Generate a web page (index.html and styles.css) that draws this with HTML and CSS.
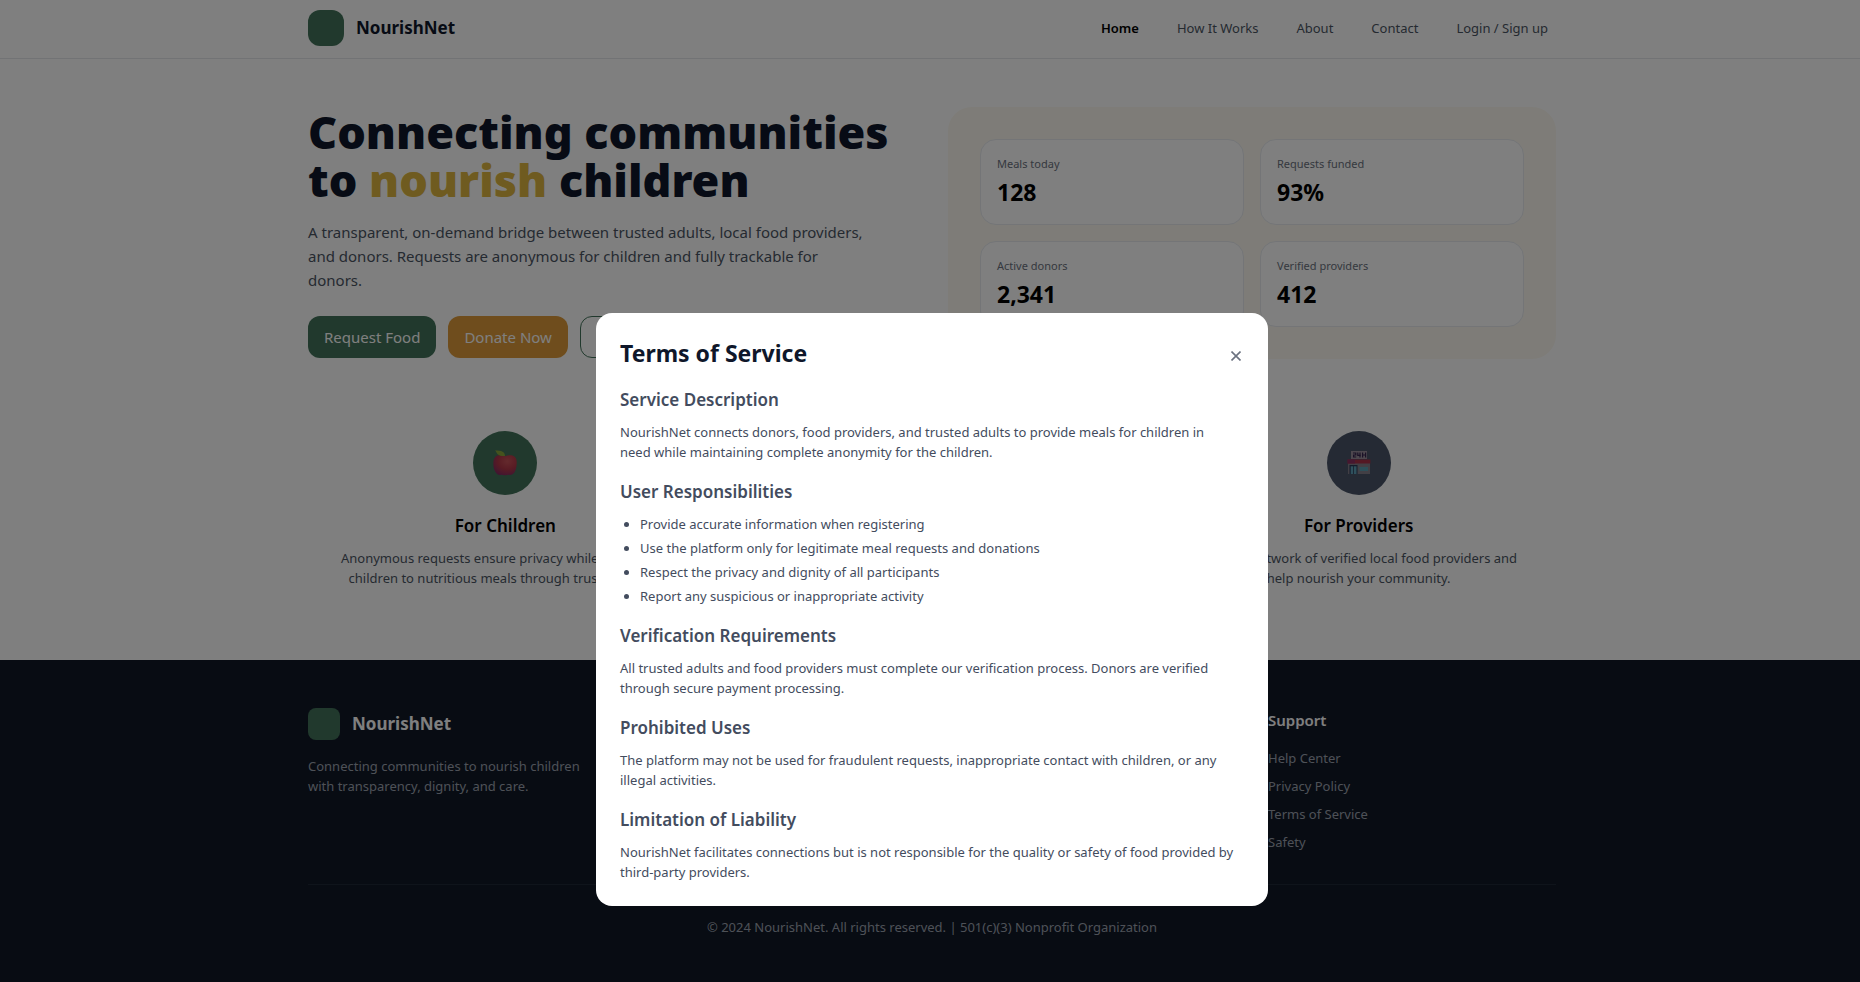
FILE: index.html
```html
<!DOCTYPE html>
<html lang="en">
<head>
<meta charset="utf-8">
<title>NourishNet</title>
<meta name="viewport" content="width=device-width, initial-scale=1">
<link rel="stylesheet" href="styles.css">
</head>
<body>
<header class="site-header">
  <div class="container header-row">
    <a class="brand" href="#"><span class="brand-mark"></span>NourishNet</a>
    <nav class="nav">
      <a class="active" href="#">Home</a>
      <a href="#">How It Works</a>
      <a href="#">About</a>
      <a href="#">Contact</a>
      <a href="#">Login / Sign up</a>
    </nav>
  </div>
</header>

<main>
  <section class="container hero">
    <div class="hero-copy">
      <h1>Connecting communities<br>to <span class="accent">nourish</span> children</h1>
      <p>A transparent, on-demand bridge between trusted adults, local food providers, and donors. Requests are anonymous for children and fully trackable for donors.</p>
      <div class="actions">
        <button class="btn btn-green" type="button">Request Food</button>
        <button class="btn btn-gold" type="button">Donate Now</button>
        <button class="btn btn-outline" type="button" aria-label="Learn More"></button>
      </div>
    </div>
    <div class="stats">
      <div class="stat"><div class="stat-label">Meals today</div><div class="stat-value">128</div></div>
      <div class="stat"><div class="stat-label">Requests funded</div><div class="stat-value">93%</div></div>
      <div class="stat"><div class="stat-label">Active donors</div><div class="stat-value">2,341</div></div>
      <div class="stat"><div class="stat-label">Verified providers</div><div class="stat-value">412</div></div>
    </div>
  </section>

  <section class="container features">
    <article class="feature">
      <div class="feature-icon green">
        <svg width="24" height="26" viewBox="0 0 24 26" aria-hidden="true">
          <defs>
            <radialGradient id="apple" cx="0.6" cy="0.3" r="0.8">
              <stop offset="0" stop-color="#c8545a"/><stop offset="0.5" stop-color="#b23848"/><stop offset="1" stop-color="#7c2866"/>
            </radialGradient>
          </defs>
          <path fill="url(#apple)" d="M12 6.200C14 5.300 17 5 19.500 5.500C22.800 6.500 24 9.500 23.700 13.500C23.500 18 22.500 22 20 24C18 25.300 16.500 25.200 15.200 24.700C13 25.500 11 25.500 8.800 24.700C7 25.500 5.500 25 4 24C1.300 21.500 0.300 17.500 0.300 13.500C0.300 9.500 1.500 6.500 4.500 5.500C7 5 10 5.300 12 6.200Z"/>
          <path fill="#8aa63a" d="M2 .6C5.500 0 9 .6 10.700 2.600C11.600 3.700 11.900 5 12 6C9 6.100 6.300 5.900 4.600 4.300C3.500 3.200 3.300 1.500 2 .6Z"/>
        </svg>
      </div>
      <h3>For Children</h3>
      <p>Anonymous requests ensure privacy while connecting children to nutritious meals through trusted adults.</p>
    </article>
    <article class="feature"></article>
    <article class="feature">
      <div class="feature-icon slate">
        <svg width="24" height="24" viewBox="0 0 24 24" aria-hidden="true">
          <rect x="4" y="0" width="16" height="8" fill="#9a8f9c"/>
          <path fill="none" stroke="#35224e" stroke-width="1.200" d="M6 2h2.800v2H6.600V6H9.200M10.800 1.600v2.800h3M13 1.600v4.800M15.600 1.500v5M18.600 1.500v5M15.600 4h3"/>
          <rect x="1" y="12" width="22" height="11" fill="#857f8b"/>
          <path fill="#a83048" d="M.6 8.500h22.800v4H.6Z"/>
          <path fill="#8d2e60" d="M.6 8.500H8v4H.6Z"/>
          <rect x="2.500" y="14" width="8" height="9" fill="#2a3856"/>
          <rect x="3.700" y="15.300" width="2.500" height="7.700" fill="#5fa0b8"/>
          <rect x="7" y="15.300" width="2.500" height="7.700" fill="#5fa0b8"/>
          <rect x="12.500" y="16" width="8.500" height="4" fill="#5a9fb2"/>
        </svg>
      </div>
      <h3>For Providers</h3>
      <p>Join our network of verified local food providers and<br>help nourish your community.</p>
    </article>
  </section>
</main>

<footer class="site-footer">
  <div class="container">
    <div class="footer-grid">
      <div>
        <a class="brand brand-small" href="#"><span class="brand-mark"></span>NourishNet</a>
        <p class="tagline">Connecting communities to nourish children with transparency, dignity, and care.</p>
      </div>
      <div class="support">
        <h4>Support</h4>
        <ul><li><a href="#">Help Center</a></li><li><a href="#">Privacy Policy</a></li><li><a href="#">Terms of Service</a></li><li><a href="#">Safety</a></li></ul>
      </div>
    </div>
    <p class="copyright">© 2024 NourishNet. All rights reserved. | 501(c)(3) Nonprofit Organization</p>
  </div>
</footer>

<div class="overlay">
  <div class="modal" role="dialog" aria-modal="true" aria-labelledby="modal-title">
    <div class="modal-head">
      <h2 id="modal-title">Terms of Service</h2>
      <button class="close" type="button" aria-label="Close"><svg width="10" height="10" viewBox="0 0 10 10" aria-hidden="true"><path d="M.5.500l9 9M9.500.500l-9 9" fill="none" stroke="currentColor" stroke-width="1.600"/></svg></button>
    </div>
    <div class="terms">
      <section>
        <h3>Service Description</h3>
        <p>NourishNet connects donors, food providers, and trusted adults to provide meals for children in<br>need while maintaining complete anonymity for the children.</p>
      </section>
      <section>
        <h3>User Responsibilities</h3>
        <ul>
          <li>Provide accurate information when registering</li>
          <li>Use the platform only for legitimate meal requests and donations</li>
          <li>Respect the privacy and dignity of all participants</li>
          <li>Report any suspicious or inappropriate activity</li>
        </ul>
      </section>
      <section>
        <h3>Verification Requirements</h3>
        <p>All trusted adults and food providers must complete our verification process. Donors are verified through secure payment processing.</p>
      </section>
      <section>
        <h3>Prohibited Uses</h3>
        <p>The platform may not be used for fraudulent requests, inappropriate contact with children, or any illegal activities.</p>
      </section>
      <section>
        <h3>Limitation of Liability</h3>
        <p>NourishNet facilitates connections but is not responsible for the quality or safety of food provided by third-party providers.</p>
      </section>
    </div>
  </div>
</div>
</body>
</html>
```
FILE: styles.css
```css
:root {
  --green: #42735a;
  --gold: #de9b3a;
  --slate: #4a5568;
  --ink: #0f172a;
  --gutter: 4px;
}

* { box-sizing: border-box; }

body {
  margin: 0;
  overflow: hidden;
  background: #fff;
  color: #000;
  font: 15px/24px "Noto Sans", "Open Sans", sans-serif;
}

h1, h2, h3, h4, p, ul { margin: 0; padding: 0; }
ul { list-style: none; }
a { color: inherit; text-decoration: none; }
button { font: inherit; cursor: pointer; }

.site-header, main, .site-footer, .overlay { padding-left: var(--gutter); }

.container {
  max-width: 1280px;
  margin: 0 auto;
  padding: 0 16px;
}

/* Header */
.site-header { border-bottom: 1px solid #e5e7eb; }

.header-row {
  display: flex;
  align-items: center;
  justify-content: space-between;
  padding-top: 10px;
  padding-bottom: 12px;
}

.brand {
  display: flex;
  align-items: center;
  gap: 12px;
  color: var(--ink);
  font-size: 17px;
  font-weight: 700;
}

.brand-mark {
  width: 36px;
  height: 36px;
  border-radius: 12px;
  background: var(--green);
}

.nav { display: flex; gap: 22px; }

.nav a {
  padding: 0 8px;
  color: #4b5563;
  font-size: 13px;
}

.nav .active { color: #000; font-weight: 600; }

/* Hero */
.hero {
  display: grid;
  grid-template-columns: 1fr 1fr;
  gap: 32px;
  align-items: center;
  padding-top: 48px;
  padding-bottom: 48px;
}

h1 {
  color: var(--ink);
  font-size: 45px;
  line-height: 48px;
  font-weight: 900;
}

.accent { color: #deb640; }

.hero-copy p {
  max-width: 560px;
  margin-top: 16px;
  color: #4b5563;
}

.actions { display: flex; gap: 12px; margin-top: 24px; }

.btn {
  padding: 8px 15px;
  border: 1px solid transparent;
  border-radius: 12px;
  color: #fff;
}

.btn-green { background: var(--green); }
.btn-gold { background: var(--gold); }
.btn-outline { min-width: 120px; background: #fff; border-color: var(--green); color: var(--green); }

.stats {
  display: grid;
  grid-template-columns: 1fr 1fr;
  gap: 16px;
  padding: 32px;
  border-radius: 24px;
  background: #fcf9f0;
}

.stat {
  padding: 16px;
  border: 1px solid #e8ebef;
  border-radius: 16px;
  background: #fff;
}

.stat-label { color: #6b7280; font-size: 11px; line-height: 16px; }
.stat-value { margin-top: 4px; font-size: 23px; line-height: 32px; font-weight: 700; }

/* Features */
.features {
  display: grid;
  grid-template-columns: repeat(3, 1fr);
  gap: 32px;
  padding-bottom: 48px;
}

.feature { padding: 24px; text-align: center; }

.feature-icon {
  display: flex;
  align-items: center;
  justify-content: center;
  width: 64px;
  height: 64px;
  margin: 0 auto 17px;
  border-radius: 50%;
}

.green { background: var(--green); }
.slate { background: var(--slate); }

.feature h3 { margin-bottom: 8px; font-size: 17px; line-height: 28px; font-weight: 600; }
.feature p { color: #4b5563; font-size: 13px; line-height: 20px; }

/* Footer */
.site-footer {
  padding-top: 48px;
  padding-bottom: 48px;
  background: #111827;
  color: #9ca3af;
  font-size: 13px;
  line-height: 20px;
}

.footer-grid { display: grid; grid-template-columns: repeat(4, 1fr); gap: 32px; }
.support { grid-column: 4; }
.brand-small { color: #fff; }
.brand-small .brand-mark { width: 32px; height: 32px; border-radius: 8px; }
.tagline { margin-top: 16px; }
.site-footer h4 { margin-bottom: 16px; color: #fff; font-size: 15px; line-height: 24px; font-weight: 600; }
.site-footer ul { display: grid; gap: 8px; }

.copyright {
  margin-top: 32px;
  padding-top: 32px;
  border-top: 1px solid #1f2937;
  text-align: center;
}

/* Modal */
.overlay {
  position: fixed;
  inset: 0;
  display: flex;
  align-items: flex-start;
  justify-content: center;
  padding-top: 313px;
  background: rgba(0, 0, 0, 0.5);
}

.modal {
  width: 100%;
  max-width: 672px;
  padding: 24px;
  border-radius: 16px;
  background: #fff;
  color: #434c5e;
}

.modal-head {
  display: flex;
  align-items: center;
  justify-content: space-between;
  margin-bottom: 16px;
}

.modal-head h2 { color: var(--ink); font-size: 23px; line-height: 33px; font-weight: 700; }

.close {
  display: flex;
  padding: 6px 3px 2px;
  border: 0;
  background: none;
  color: #6b7280;
}

.terms { display: grid; gap: 16px; font-size: 13px; line-height: 20px; }
.terms h3 { margin-bottom: 8px; font-size: 17px; line-height: 28px; font-weight: 600; }
.terms ul { display: grid; gap: 4px; padding-left: 20px; list-style: disc; }
```
